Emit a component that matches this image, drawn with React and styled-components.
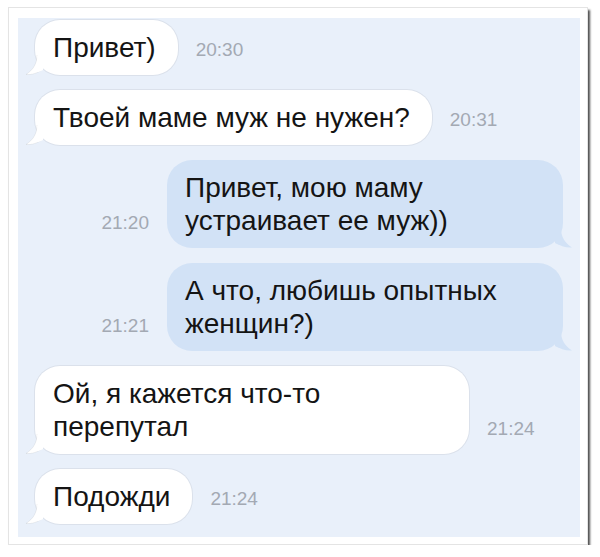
import React from 'react';
import styled, { createGlobalStyle } from 'styled-components';

const GlobalStyle = createGlobalStyle`
  body {
    margin: 0;
    background: #fff;
    font-family: "Liberation Sans", Arial, sans-serif;
  }
`;

const Frame = styled.div`
  box-sizing: border-box;
  width: 580px;
  height: 538px;
  margin: 7px 0 0 8px;
  padding: 10px 7px 7px 9px;
  background: #fff;
  border: 1px solid #e4e4e4;
  box-shadow: 2px 3px 2px rgba(20, 20, 20, 0.75);
`;

const Chat = styled.div`
  height: 100%;
  box-sizing: border-box;
  padding: 2px 17px 0 17px;
  background: #e9f0fa;
  display: flex;
  flex-direction: column;
  gap: 15px;
`;

const Row = styled.div`
  display: flex;
  align-items: flex-end;
  justify-content: ${p => (p.out ? 'flex-end' : 'flex-start')};
  gap: 18px;
`;

const Bubble = styled.div`
  position: relative;
  box-sizing: border-box;
  width: ${p => (p.w ? p.w + 'px' : 'auto')};
  padding: 11px 22px 11px 18px;
  font-size: 28px;
  line-height: 33px;
  color: #141414;
  border-radius: 25px;
  background: ${p => (p.out ? '#d2e2f6' : '#ffffff')};
  box-shadow: ${p => (p.out ? 'none' : '0 0 0 1px rgba(0, 0, 0, 0.06)')};
`;

const Tail = styled.svg`
  position: absolute;
  bottom: 0;
  width: 18px;
  height: 20px;
  ${p => (p.out ? 'right: -10px; transform: scaleX(-1);' : 'left: -10px;')}
`;

const Time = styled.span`
  font-size: 19px;
  line-height: 22px;
  color: #a3a9b3;
  padding-bottom: 14px;
  white-space: nowrap;
`;

const messages = [
  { text: ['Привет)'], time: '20:30' },
  { text: ['Твоей маме муж не нужен?'], time: '20:31' },
  { text: ['Привет, мою маму', 'устраивает ее муж))'], time: '21:20', out: true, w: 396 },
  { text: ['А что, любишь опытных', 'женщин?)'], time: '21:21', out: true, w: 396 },
  { text: ['Ой, я кажется что-то', 'перепутал'], time: '21:24', w: 434 },
  { text: ['Подожди'], time: '21:24' },
];

const Message = ({ m }) => {
  const fill = m.out ? '#d2e2f6' : '#ffffff';
  return (
    <Row out={m.out}>
      {m.out && <Time>{m.time}</Time>}
      <Bubble out={m.out} w={m.w}>
        <Tail out={m.out} viewBox="0 0 18 20">
          <path
            d="M12 0 C12 9 8 15 1 19.5 C7 20 13 18 18 14 L18 0 Z"
            fill={fill}
            stroke={m.out ? 'none' : 'rgba(0,0,0,0.08)'}
            strokeWidth="0.8"
          />
          <path d="M12.4 0 L18 0 L18 15 C14 17 12.4 17 12.4 17 Z" fill={fill} />
        </Tail>
        {m.text.map((t, i) => (
          <React.Fragment key={i}>
            {i > 0 && <br />}
            {t}
          </React.Fragment>
        ))}
      </Bubble>
      {!m.out && <Time>{m.time}</Time>}
    </Row>
  );
};

export default function App() {
  return (
    <>
      <GlobalStyle />
      <Frame>
        <Chat>
          {messages.map((m, i) => (
            <Message key={i} m={m} />
          ))}
        </Chat>
      </Frame>
    </>
  );
}
